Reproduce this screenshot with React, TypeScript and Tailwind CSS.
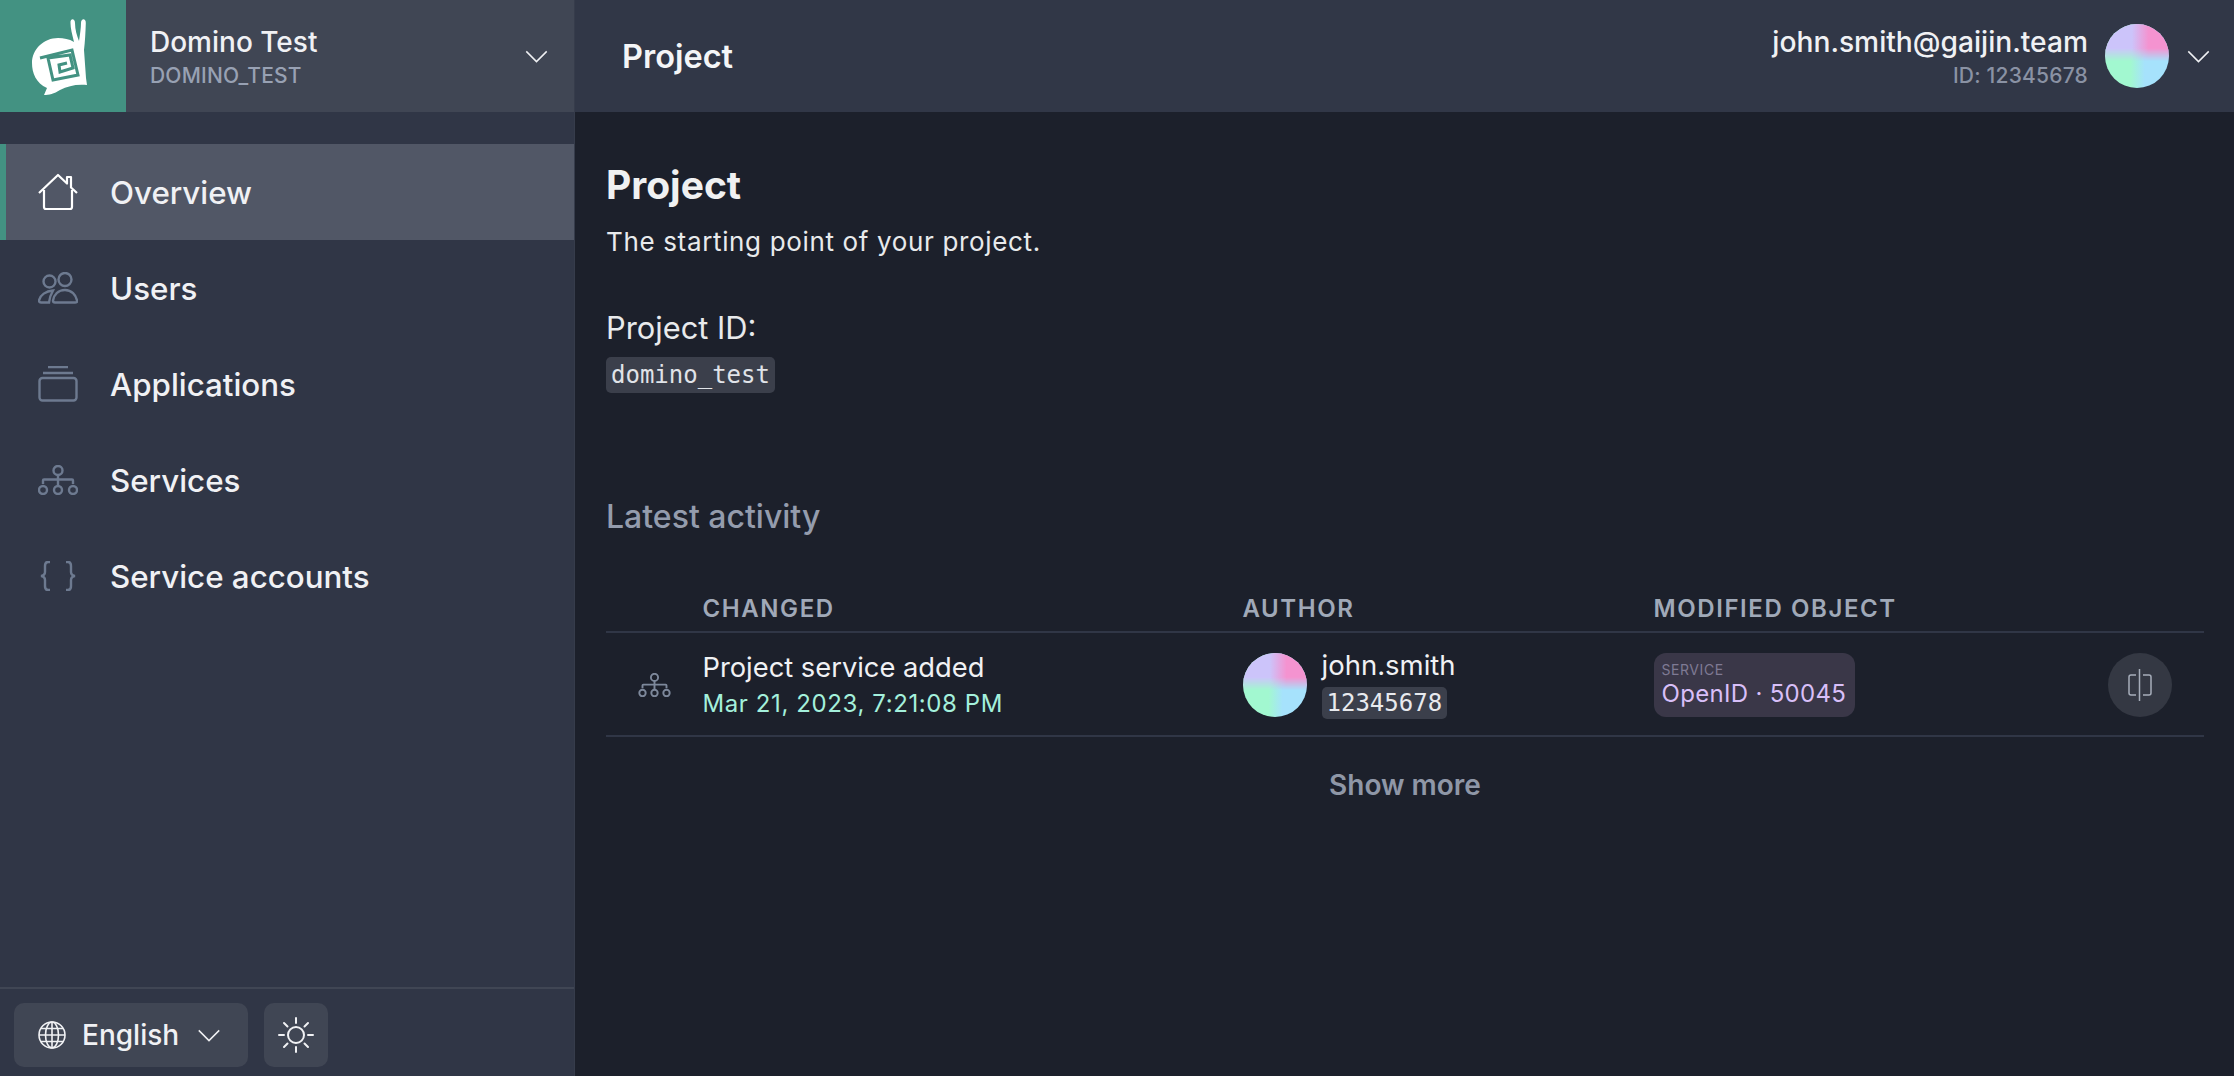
function Chevron({ className }: { className: string }) {
  return (
    <svg className={className} viewBox="0 0 24 14" fill="none" stroke="currentColor" strokeWidth="1.6">
      <path d="M1 1.5 12 12.5 23 1.5" />
    </svg>
  )
}

function Avatar({ className }: { className: string }) {
  return (
    <div className={`shrink-0 rounded-full overflow-hidden bg-[linear-gradient(90deg,#a2f8d0_40%,#a6e2fc_62%)] ${className}`}>
      <div className="w-full h-full bg-[linear-gradient(90deg,#ccc4fa_42%,#f493d0_68%)] [mask-image:linear-gradient(180deg,#000_38%,transparent_58%)]" />
    </div>
  )
}

function SnailLogo() {
  return (
    <svg className="w-[126px] h-[112px]" viewBox="0 0 126 112">
      <path
        fill="#fff"
        d="M44 95 47 88C36 83 32 73 32 63 32 49 44 38 58 38 64 38 69 39 74 42 72 34 70.500 28 70.500 23 70 18 75 18 75 23 75 30 77 36 79 41 80 34 81 28 81 23 81 18 86 18 85.800 23 85.500 32 85 42 84 50L86 78 87 85C76 84 68 86 60 90 54 94 49 95 44 95Z"
      />
      <path
        fill="none"
        stroke="#439282"
        strokeWidth="3"
        d="M40 58 72 50 78 75 53 80 48 58 70 55 73 68 60 72 59 65 67 63"
      />
    </svg>
  )
}

function HomeIcon() {
  return (
    <svg className="w-[40px] h-[38px] text-white" viewBox="0 0 40 38" fill="none" stroke="currentColor" strokeWidth="2.200">
      <path d="M1 20 20 2 29 10.500V4h4v10.500L39 20" strokeLinejoin="round" />
      <path d="M6 17v17a2 2 0 0 0 2 2h24a2 2 0 0 0 2-2V17" />
    </svg>
  )
}

function UsersIcon() {
  return (
    <svg className="w-[40px] h-[32px]" viewBox="0 0 40 32" fill="none" stroke="currentColor" strokeWidth="2.400">
      <circle cx="11.500" cy="9.500" r="6" />
      <circle cx="27" cy="7.500" r="6.500" />
      <path d="M15 18.500C8 19 2 23 1 28.500 1 30 2 30.500 3 30.500H11C11.500 26 13 22 15 18.500Z" />
      <path d="M27 18C20 18 16 23 15 28.500 15 30 16 30.500 17 30.500H37C38.500 30.500 39.500 30 39 28.500 38 23 33.500 18 27 18Z" />
    </svg>
  )
}

function AppsIcon() {
  return (
    <svg className="w-[40px] h-[36px]" viewBox="0 0 40 36" fill="none" stroke="currentColor" strokeWidth="2.400">
      <path d="M10 1h20M5 7h30" />
      <rect x="1.500" y="12" width="37" height="22.500" rx="3" />
    </svg>
  )
}

function ServicesIcon({ className }: { className: string }) {
  return (
    <svg className={className} viewBox="0 0 40 30" fill="none" stroke="currentColor" strokeWidth="2.400">
      <circle cx="20" cy="5.500" r="4.500" />
      <path d="M20 10v11M5 19v-3.500a1 1 0 0 1 1-1h28a1 1 0 0 1 1 1V19" />
      <circle cx="5" cy="25" r="4" />
      <circle cx="20" cy="25" r="4" />
      <circle cx="35" cy="25" r="4" />
    </svg>
  )
}

function BracesIcon() {
  return (
    <svg className="w-[36px] h-[30px]" viewBox="0 0 36 30" fill="none" stroke="currentColor" strokeWidth="2.400">
      <path d="M10 1H8C5.500 1 5 2.500 5 5v6C5 13 4 14.500 1 15c3 .500 4 2 4 4v6c0 2.500.500 4 3 4h2" />
      <path d="M26 1h2c2.500 0 3 1.500 3 4v6c0 2 1 3.500 4 4-3 .500-4 2-4 4v6c0 2.500-.500 4-3 4h-2" />
    </svg>
  )
}

function GlobeIcon() {
  return (
    <svg className="w-[28px] h-[28px]" viewBox="0 0 28 28" fill="none" stroke="currentColor" strokeWidth="1.600">
      <circle cx="14" cy="14" r="13" />
      <ellipse cx="14" cy="14" rx="6.500" ry="13" />
      <path d="M14 1v26M1 14h26M3 7.500h22M3 20.500h22" />
    </svg>
  )
}

function SunIcon() {
  return (
    <svg className="w-[36px] h-[36px]" viewBox="0 0 36 36" fill="none" stroke="currentColor" strokeWidth="2" strokeLinecap="round">
      <circle cx="18" cy="18" r="8" />
      <path d="M18 1v5M18 30v5M1 18h5M30 18h5M6 6l3.500 3.500M26.500 26.500 30 30M6 30l3.500-3.500M26.500 9.500 30 6" />
    </svg>
  )
}

function CompareIcon() {
  return (
    <svg className="w-[24px] h-[32px]" viewBox="0 0 24 32" fill="none" stroke="#a6adba" strokeWidth="1.500">
      <path d="M11.500 0v32" />
      <path d="M8 6H3a2 2 0 0 0-2 2v16a2 2 0 0 0 2 2h5" />
      <path d="M15 6h6a2 2 0 0 1 2 2v16a2 2 0 0 1-2 2h-6" />
    </svg>
  )
}

const navItems = [
  { label: "Users", icon: <UsersIcon /> },
  { label: "Applications", icon: <AppsIcon /> },
  { label: "Services", icon: <ServicesIcon className="w-[40px] h-[30px]" /> },
  { label: "Service accounts", icon: <BracesIcon /> },
]

function Sidebar() {
  return (
    <aside className="w-[575px] shrink-0 flex flex-col bg-[#303646] border-r border-[#363c4b]">
      <div className="h-[112px] flex items-center bg-[#404654]">
        <div className="w-[126px] h-full bg-[#439282] shrink-0">
          <SnailLogo />
        </div>
        <div className="ml-[24px] flex-1 pt-[2px]">
          <div className="text-[28px] leading-[36px] font-medium text-[#f0f1f4]">Domino Test</div>
          <div className="text-[21px] leading-[28px] mt-[2px] font-medium tracking-[0.01em] text-[#98a1b3]">DOMINO_TEST</div>
        </div>
        <Chevron className="w-[23px] h-[13px] mr-[26px] text-[#f0f1f4]" />
      </div>
      <nav className="mt-[32px] flex flex-col">
        <a className="h-[96px] flex items-center bg-[#515766] border-l-[6px] border-[#439282] pl-[32px] gap-[32px] text-[31.300px] font-medium text-[#f0f1f4]">
          <HomeIcon />
          <span className="pt-[2px]">Overview</span>
        </a>
        {navItems.map((item) => (
          <a key={item.label} className="h-[96px] flex items-center pl-[38px] text-[31.300px] font-medium text-[#f0f1f4]">
            <span className="w-[40px] flex justify-center text-[#6d7a90]">{item.icon}</span>
            <span className="ml-[32px] pt-[2px]">{item.label}</span>
          </a>
        ))}
      </nav>
      <div className="mt-auto h-[89px] border-t-2 border-[#404654] flex items-start pt-[14px] pl-[14px] gap-[16px]">
        <button className="w-[234px] h-[64px] rounded-[10px] bg-[#404654] flex items-center pl-[24px] text-[#f0f1f4]">
          <GlobeIcon />
          <span className="ml-[16px] text-[28px] font-medium">English</span>
          <Chevron className="w-[24px] h-[13px] ml-[18px]" />
        </button>
        <button className="w-[64px] h-[64px] rounded-[10px] bg-[#404654] flex items-center justify-center text-[#f0f1f4]">
          <SunIcon />
        </button>
      </div>
    </aside>
  )
}

function Header() {
  return (
    <header className="h-[112px] flex items-center bg-[#313747] pl-[47px] pr-[24px]">
      <h2 className="text-[32.500px] pt-[2px] font-semibold text-[#f4f5f7] flex-1">Project</h2>
      <div className="text-right pt-[2px]">
        <div className="text-[28.200px] leading-[36px] font-medium text-[#f0f1f4]">john.smith@gaijin.team</div>
        <div className="text-[21px] leading-[28px] mt-[2px] font-medium tracking-[0.01em] text-[#8a92a4]">ID: 12345678</div>
      </div>
      <Avatar className="w-[64px] h-[64px] ml-[17px]" />
      <Chevron className="w-[23px] h-[13px] ml-[18px] text-[#f0f1f4]" />
    </header>
  )
}

function ActivityTable() {
  return (
    <div className="mt-[48px]">
      <div className="grid grid-cols-[96.500px_540px_411px_1fr] h-[46px] items-center border-b-2 border-[#303646] text-[24px] font-semibold tracking-[0.066em] text-[#a0a9b8]">
        <div />
        <div>CHANGED</div>
        <div>AUTHOR</div>
        <div>MODIFIED OBJECT</div>
      </div>
      <div className="grid grid-cols-[96.500px_540px_411px_1fr] items-center h-[104px] pt-[2px] border-b-2 border-[#303646]">
        <div className="pl-[32px] text-[#7d889b]">
          <ServicesIcon className="w-[33px] h-[24px]" />
        </div>
        <div className="pt-[2px]">
          <div className="text-[27.300px] leading-[36px] text-[#f0f1f4]">Project service added</div>
          <div className="text-[24px] leading-[36px] text-[#a4f0dc] tracking-[0.025em]">Mar 21, 2023, 7:21:08 PM</div>
        </div>
        <div className="flex items-center gap-[15px]">
          <Avatar className="w-[64px] h-[64px]" />
          <div>
            <div className="text-[27.500px] leading-[32px] text-[#f0f1f4] -mt-[3px]">john.smith</div>
            <code className="inline-block mt-[6px] px-[5px] h-[32px] leading-[32px] rounded-[5px] bg-[#3b3f4b] text-[24px] text-[#e8eaee] font-['DejaVu_Sans_Mono',monospace]">12345678</code>
          </div>
        </div>
        <div className="flex items-center justify-between pr-[32px]">
          <div className="h-[64px] w-[201px] rounded-[12px] bg-[#3a3748] px-[8px] pt-[9px]">
            <div className="text-[14px] leading-[16px] tracking-[0.04em] text-[#7f7a94]">SERVICE</div>
            <div className="text-[24px] leading-[32px] tracking-[0.013em] whitespace-nowrap text-[#d8bff8]">OpenID · 50045</div>
          </div>
          <button className="w-[64px] h-[64px] rounded-full bg-[#343843] flex items-center justify-center">
            <CompareIcon />
          </button>
        </div>
      </div>
      <div className="text-center text-[28px] font-semibold text-[#8f97a7] mt-[27px]">Show more</div>
    </div>
  )
}

export default function App() {
  return (
    <div className="h-screen flex bg-[#1c202b] overflow-hidden font-['Inter',sans-serif]">
      <Sidebar />
      <div className="flex-1 flex flex-col">
        <Header />
        <main className="pl-[31px] pr-[30px] pt-[49px]">
          <h1 className="text-[39px] leading-[48px] font-bold text-[#f0f1f2]">Project</h1>
          <p className="mt-[13px] text-[26px] leading-[40px] tracking-[0.025em] text-[#e8eaec]">The starting point of your project.</p>
          <div className="mt-[44px] text-[30.800px] leading-[44px] text-[#e8eaec]">Project ID:</div>
          <code className="inline-block mt-[7px] px-[5px] h-[36px] leading-[36px] rounded-[5px] bg-[#3b3f4b] text-[24px] text-[#e0e3e8] font-['DejaVu_Sans_Mono',monospace]">domino_test</code>
          <h3 className="mt-[102px] text-[32px] leading-[44px] font-medium text-[#949cad]">Latest activity</h3>
          <ActivityTable />
        </main>
      </div>
    </div>
  )
}
